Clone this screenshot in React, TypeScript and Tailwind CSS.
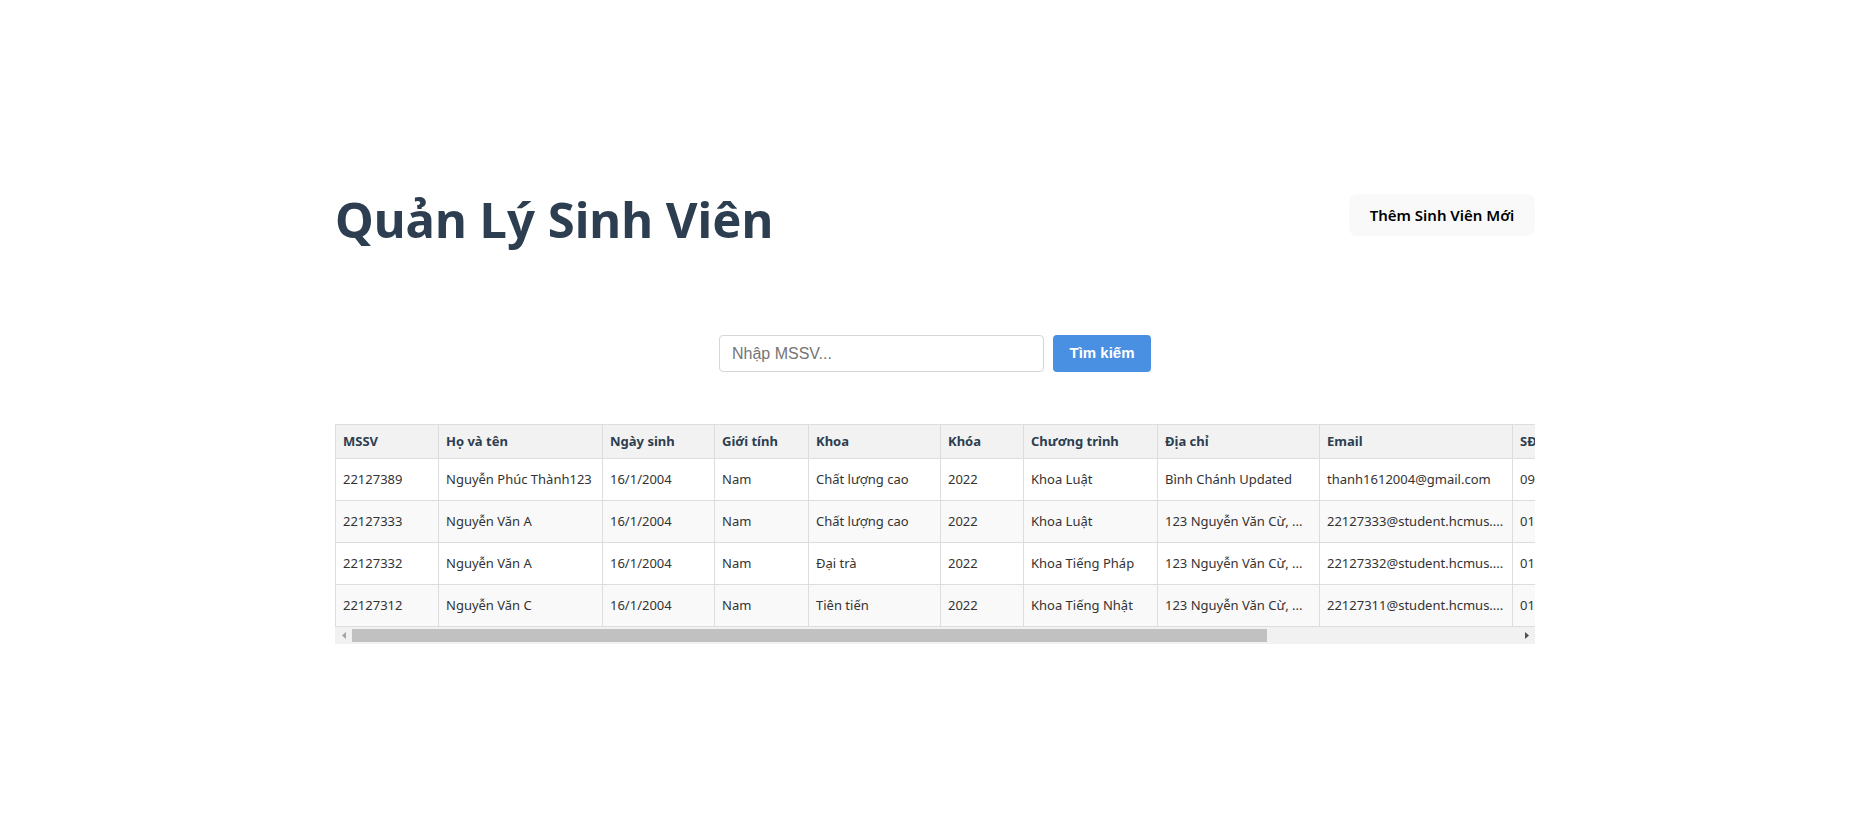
import { useState } from 'react';

interface Student {
  mssv: string;
  name: string;
  dob: string;
  gender: string;
  faculty: string;
  course: string;
  program: string;
  address: string;
  email: string;
  phone: string;
  status: string;
}

const students: Student[] = [
  {
    mssv: '22127389',
    name: 'Nguyễn Phúc Thành123',
    dob: '16/1/2004',
    gender: 'Nam',
    faculty: 'Chất lượng cao',
    course: '2022',
    program: 'Khoa Luật',
    address: 'Bình Chánh Updated',
    email: 'thanh1612004@gmail.com',
    phone: '0909123456',
    status: 'Đang học',
  },
  {
    mssv: '22127333',
    name: 'Nguyễn Văn A',
    dob: '16/1/2004',
    gender: 'Nam',
    faculty: 'Chất lượng cao',
    course: '2022',
    program: 'Khoa Luật',
    address: '123 Nguyễn Văn Cừ, ...',
    email: '22127333@student.hcmus....',
    phone: '0123456789',
    status: 'Đang học',
  },
  {
    mssv: '22127332',
    name: 'Nguyễn Văn A',
    dob: '16/1/2004',
    gender: 'Nam',
    faculty: 'Đại trà',
    course: '2022',
    program: 'Khoa Tiếng Pháp',
    address: '123 Nguyễn Văn Cừ, ...',
    email: '22127332@student.hcmus....',
    phone: '0123456789',
    status: 'Đang học',
  },
  {
    mssv: '22127312',
    name: 'Nguyễn Văn C',
    dob: '16/1/2004',
    gender: 'Nam',
    faculty: 'Tiên tiến',
    course: '2022',
    program: 'Khoa Tiếng Nhật',
    address: '123 Nguyễn Văn Cừ, ...',
    email: '22127311@student.hcmus....',
    phone: '0123456789',
    status: 'Đang học',
  },
];

const columns = [
  { label: 'MSSV', w: 'w-[103px]' },
  { label: 'Họ và tên', w: 'w-[164px]' },
  { label: 'Ngày sinh', w: 'w-[112px]' },
  { label: 'Giới tính', w: 'w-[94px]' },
  { label: 'Khoa', w: 'w-[132px]' },
  { label: 'Khóa', w: 'w-[83px]' },
  { label: 'Chương trình', w: 'w-[134px]' },
  { label: 'Địa chỉ', w: 'w-[162px]' },
  { label: 'Email', w: 'w-[193px]' },
  { label: 'SĐT', w: 'w-[110px]' },
  { label: 'Tình trạng', w: 'w-[110px]' },
  { label: 'Thao tác', w: 'w-[132px]' },
];

const App = () => {
  const [query, setQuery] = useState<string>('');

  return (
    <div className="min-h-screen bg-white font-['Noto_Sans',sans-serif]">
      <div className="flex justify-center pl-[13px]">
        <div className="w-[1200px] pt-[183px]">
          <div className="flex items-center justify-between h-[70px]">
            <h1 className="text-[49px] font-bold text-[#2c3e50] leading-none mt-[3px]">Quản Lý Sinh Viên</h1>
            <button className="h-[42px] w-[186px] -mt-[6px] rounded-lg bg-[#f9f9f9] text-[15px] font-semibold text-black">
              Thêm Sinh Viên Mới
            </button>
          </div>

          <div className="flex justify-center gap-[9px] mt-[82px]">
            <input
              type="text"
              value={query}
              onChange={(e) => setQuery(e.target.value)}
              placeholder="Nhập MSSV..."
              className="w-[325px] h-[37px] px-[12px] rounded border border-[#d6d6d6] text-[16px] font-['Liberation_Sans',Arial,sans-serif] placeholder:text-[#757575] outline-none"
            />
            <button className="w-[98px] h-[37px] rounded bg-[#4a90e2] text-white text-[15px] font-bold font-['Liberation_Sans',Arial,sans-serif]">
              Tìm kiếm
            </button>
          </div>

          <div className="mt-[52px]">
            <div className="overflow-x-hidden">
              <table className="table-fixed w-[1529px] border-collapse text-[13px]">
                <thead>
                  <tr className="h-[34px] bg-[#f2f2f2] text-[#2c3e50]">
                    {columns.map((c) => (
                      <th key={c.label} className={`${c.w} border border-[#ddd] px-[7px] pt-[1px] text-left font-bold`}>
                        {c.label}
                      </th>
                    ))}
                  </tr>
                </thead>
                <tbody className="text-[#333]">
                  {students.map((s, i) => (
                    <tr key={s.mssv} className={i % 2 === 1 ? 'h-[42px] bg-[#f9f9f9]' : 'h-[42px] bg-white'}>
                      <td className="border border-[#ddd] px-[7px] whitespace-nowrap overflow-hidden">{s.mssv}</td>
                      <td className="border border-[#ddd] px-[7px] whitespace-nowrap overflow-hidden">{s.name}</td>
                      <td className="border border-[#ddd] px-[7px] whitespace-nowrap overflow-hidden">{s.dob}</td>
                      <td className="border border-[#ddd] px-[7px] whitespace-nowrap overflow-hidden">{s.gender}</td>
                      <td className="border border-[#ddd] px-[7px] whitespace-nowrap overflow-hidden">{s.faculty}</td>
                      <td className="border border-[#ddd] px-[7px] whitespace-nowrap overflow-hidden">{s.course}</td>
                      <td className="border border-[#ddd] px-[7px] whitespace-nowrap overflow-hidden">{s.program}</td>
                      <td className="border border-[#ddd] px-[7px] whitespace-nowrap overflow-hidden">{s.address}</td>
                      <td className="border border-[#ddd] px-[7px] whitespace-nowrap overflow-hidden">{s.email}</td>
                      <td className="border border-[#ddd] px-[7px] whitespace-nowrap overflow-hidden">{s.phone}</td>
                      <td className="border border-[#ddd] px-[7px] whitespace-nowrap overflow-hidden">{s.status}</td>
                      <td className="border border-[#ddd] px-[7px] whitespace-nowrap overflow-hidden">Sửa | Xóa</td>
                    </tr>
                  ))}
                </tbody>
              </table>
            </div>
            {/* horizontal scrollbar */}
            <div className="flex items-center h-[17px] bg-[#f1f1f1]">
              <div className="flex items-center justify-center w-[17px] h-[17px]">
                <svg width="4" height="7" viewBox="0 0 4 7">
                  <polygon points="4,0 0,3.5 4,7" fill="#a3a3a3" />
                </svg>
              </div>
              <div className="flex-1 h-[17px] flex items-center">
                <div className="w-[915px] h-[13px] bg-[#c1c1c1]" />
              </div>
              <div className="flex items-center justify-center w-[17px] h-[17px]">
                <svg width="4" height="7" viewBox="0 0 4 7">
                  <polygon points="0,0 4,3.5 0,7" fill="#505050" />
                </svg>
              </div>
            </div>
          </div>
        </div>
      </div>
    </div>
  );
};

export default App;
